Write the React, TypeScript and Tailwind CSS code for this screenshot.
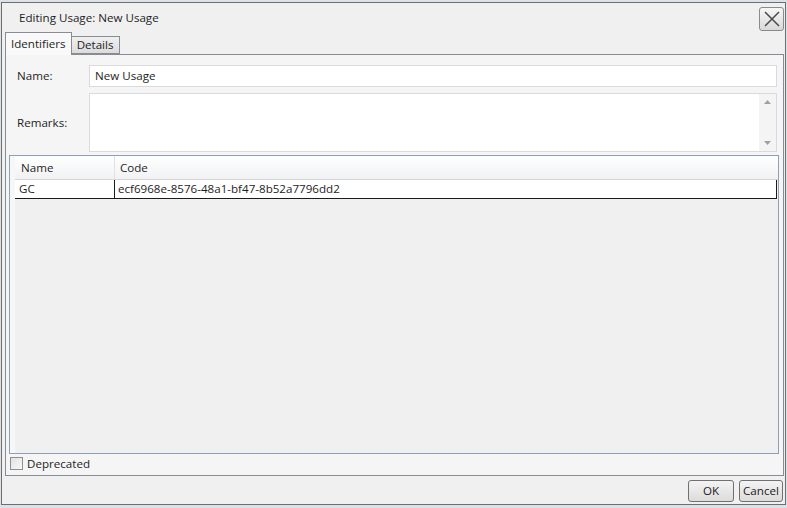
import React from 'react';

const font = "font-['Segoe_UI','Open_Sans',sans-serif]";

const CloseIcon = () => (
    <svg width="18" height="18" viewBox="0 0 18 18">
        <path d="M2 2L16 16M16 2L2 16" stroke="#4a4a4a" strokeWidth="1.5" fill="none" />
    </svg>
);

const ScrollArrow = ({ up }: { up?: boolean }) => (
    <svg width="7" height="4" viewBox="0 0 7 4">
        <path d={up ? 'M0 4L3.5 0L7 4Z' : 'M0 0L3.5 4L7 0Z'} fill="#a0a0a0" />
    </svg>
);

const Button = ({ label, width }: { label: string; width: string }) => (
    <button
        className={`${width} h-[22px] border border-[#707070] rounded-[3px] bg-gradient-to-b from-[#f3f3f3] to-[#dcdcdc] text-[11.6px] text-[#1a1a1a] flex items-center justify-center`}
    >
        {label}
    </button>
);

const App: React.FC = () => {
    return (
        <div className={`w-[787px] h-[508px] bg-[#dde2e8] ${font} text-[11.6px] text-[#1e1e1e] overflow-hidden`}>
            <div className="ml-[1px] mt-[2px] w-[785px] h-[503px] border border-[#6e6e6e] bg-[#f0f0f0] flex flex-col">
                {/* title bar */}
                <div className="h-[29px] flex items-center justify-between pl-[17px] pr-[1px]">
                    <span>Editing Usage: New Usage</span>
                    <button className="w-[25px] h-[24px] border border-[#8a8a8a] rounded-[3px] bg-gradient-to-b from-[#f7f7f7] to-[#d9d9d9] flex items-center justify-center mt-[2px]">
                        <CloseIcon />
                    </button>
                </div>

                {/* tabs */}
                <div className="h-[22px] flex items-end pl-[3px]">
                    <div className="h-[23px] px-[5px] border border-b-0 border-[#898c95] bg-[#f9f9f9] flex items-center relative z-10 -mb-[1px]">
                        Identifiers
                    </div>
                    <div className="h-[18px] px-[5px] border border-l-0 border-[#898c95] bg-gradient-to-b from-[#f0f0f0] to-[#dcdcdc] flex items-center">
                        Details
                    </div>
                </div>

                {/* tab panel */}
                <div className="flex-1 ml-[3px] mr-[1px] border border-[#898c95] bg-[#f5f5f5] flex flex-col pt-[10px] pl-[3px] pr-[4px]">
                    <div className="flex items-center pl-[8px] pr-[2px]">
                        <span className="w-[72px] shrink-0">Name:</span>
                        <div className="flex-1 h-[22px] border border-[#dadada] bg-white flex items-center pl-[5px]">
                            New Usage
                        </div>
                    </div>
                    <div className="flex items-center pl-[8px] pr-[2px] mt-[6px]">
                        <span className="w-[72px] shrink-0">Remarks:</span>
                        <div className="flex-1 h-[59px] border border-[#dadada] bg-white flex justify-end">
                            <div className="w-[17px] bg-[#f4f4f4] flex flex-col items-center justify-between py-[6px]">
                                <ScrollArrow up />
                                <ScrollArrow />
                            </div>
                        </div>
                    </div>

                    {/* grid */}
                    <div className="mt-[3px] h-[299px] border border-[#8da0b5] bg-[#f0f0f0] flex">
                        <div className="w-[5px] bg-[#f7f7f7]" />
                        <div className="flex-1 flex flex-col">
                            <div className="h-[24px] flex bg-gradient-to-b from-white to-[#f1f2f4] border-b border-[#d5d5d5]">
                                <div className="w-[100px] pl-[6px] flex items-center border-r border-[#e0e0e0]">Name</div>
                                <div className="flex-1 pl-[5px] flex items-center">Code</div>
                            </div>
                            <div className="h-[19px] flex bg-white border-b border-[#1a1a1a] mr-[1px]">
                                <div className="w-[100px] pl-[4px] flex items-center border-r border-[#1a1a1a]">GC</div>
                                <div className="flex-1 pl-[3px] flex items-center border-r border-[#1a1a1a]">
                                    ecf6968e-8576-48a1-bf47-8b52a7796dd2
                                </div>
                            </div>
                        </div>
                    </div>

                    <div className="h-[13px] flex items-center mt-[3px] pl-[1px]">
                        <div className="w-[13px] h-[13px] border border-[#8f8f8f] bg-gradient-to-br from-[#e2e2e2] to-[#f8f8f8]" />
                        <span className="ml-[4px]">Deprecated</span>
                    </div>
                </div>

                {/* footer */}
                <div className="h-[28px] flex items-center justify-end gap-[5px] pr-[2px] pt-[1px]">
                    <Button label="OK" width="w-[46px]" />
                    <Button label="Cancel" width="w-[44px]" />
                </div>
            </div>
        </div>
    );
};

export default App;
